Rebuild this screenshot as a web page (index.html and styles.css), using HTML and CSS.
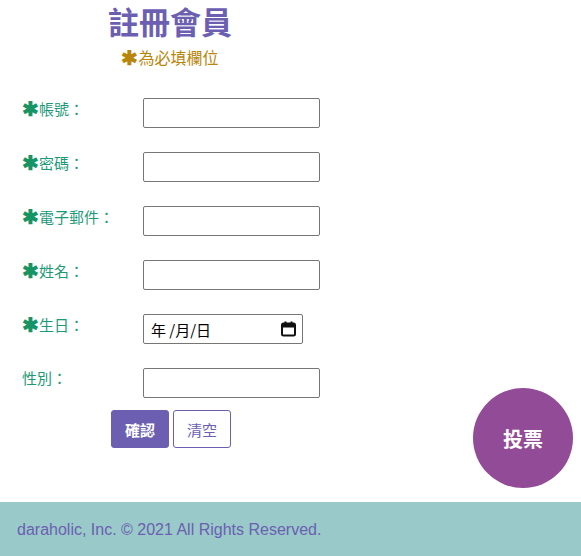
FILE: index.html
```html
<!DOCTYPE html>
<html lang="zh-Hant">
<head>
<meta charset="utf-8">
<title>註冊會員</title>
<link rel="stylesheet" href="styles.css">
</head>
<body>
<main class="page">
  <header class="head">
    <h1 class="title">註冊會員</h1>
    <p class="note"><span class="star">✱</span>為必填欄位</p>
  </header>
  <form class="form">
    <div class="row">
      <label class="label"><span class="req">✱</span>帳號：</label>
      <input class="field" type="text">
    </div>
    <div class="row">
      <label class="label"><span class="req">✱</span>密碼：</label>
      <input class="field" type="password">
    </div>
    <div class="row">
      <label class="label"><span class="req">✱</span>電子郵件：</label>
      <input class="field" type="text">
    </div>
    <div class="row">
      <label class="label"><span class="req">✱</span>姓名：</label>
      <input class="field" type="text">
    </div>
    <div class="row">
      <label class="label"><span class="req">✱</span>生日：</label>
      <div class="field date"><span class="date-text">年 /月/日</span>
        <svg class="cal" width="15" height="16" viewBox="0 0 15 16"><rect x="1" y="2.5" width="13" height="12" rx="1.5" fill="none" stroke="#111" stroke-width="2"/><rect x="1" y="2.5" width="13" height="4" fill="#111"/><rect x="3.5" y="0.5" width="2" height="3" fill="#111"/><rect x="9.5" y="0.5" width="2" height="3" fill="#111"/></svg>
      </div>
    </div>
    <div class="row">
      <label class="label">性別：</label>
      <input class="field" type="text">
    </div>
    <div class="actions">
      <button class="btn btn-primary" type="button">確認</button>
      <button class="btn btn-outline" type="reset">清空</button>
    </div>
  </form>
</main>
<a class="vote" href="#">投票</a>
<footer class="footer">daraholic, Inc. © 2021 All Rights Reserved.</footer>
</body>
</html>
```
FILE: styles.css
```css
html, body {
  margin: 0;
  padding: 0;
  background: #fff;
  font-family: "Noto Sans", "Noto Sans CJK TC", sans-serif;
}
.page {
  height: 502px;
}
.head {
  width: 340px;
  text-align: center;
}
.title {
  margin: 0;
  font-size: 31px;
  line-height: 42px;
  font-weight: 700;
  color: #6c5fb2;
  font-family: "Noto Sans CJK TC", sans-serif;
}
.note {
  margin: 5px 0 0;
  font-size: 16px;
  line-height: 20px;
  color: #b8860b;
  font-family: "Noto Sans CJK TC", sans-serif;
}
.star {
  font-size: 20px;
  font-weight: 700;
  vertical-align: -1px;
}
.form {
  margin-top: 31px;
  padding-left: 22px;
}
.row {
  display: flex;
  align-items: flex-start;
  margin-bottom: 24px;
}
.label {
  width: 121px;
  font-size: 15px;
  line-height: 20px;
  color: #1c9a78;
  font-family: "Noto Sans CJK TC", sans-serif;
}
.req {
  color: #179463;
  font-size: 20px;
  font-weight: 700;
  vertical-align: -1px;
}
.field {
  box-sizing: border-box;
  width: 177px;
  height: 30px;
  margin: 0;
  border: 1px solid #767676;
  border-radius: 2px;
  background: #fff;
  font-size: 15px;
}
.date {
  width: 160px;
  display: flex;
  align-items: center;
  justify-content: space-between;
  padding: 0 6px 0 7px;
}
.date-text {
  font-size: 15px;
  color: #000;
  font-family: "Noto Sans CJK TC", sans-serif;
}
.actions {
  display: flex;
  gap: 4px;
  margin-top: -12px;
  padding-left: 89px;
}
.btn {
  box-sizing: border-box;
  width: 58px;
  height: 38px;
  border-radius: 3px;
  font-size: 15px;
  font-family: "Noto Sans CJK TC", sans-serif;
  padding: 0;
}
.btn-primary {
  background: #6c5fb2;
  border: 1px solid #6c5fb2;
  color: #fff;
  font-weight: 700;
}
.btn-outline {
  background: #fff;
  border: 1px solid #6c5fb2;
  color: #6c5fb2;
}
.vote {
  position: absolute;
  left: 473px;
  top: 388px;
  width: 100px;
  height: 100px;
  border-radius: 50%;
  background: #924b97;
  color: #fff;
  font-size: 20px;
  font-weight: 700;
  font-family: "Noto Sans CJK TC", sans-serif;
  text-decoration: none;
  display: flex;
  align-items: center;
  justify-content: center;
}
.footer {
  box-sizing: border-box;
  height: 54px;
  background: #99c9c8;
  color: #6c5fb2;
  font-size: 16px;
  padding: 18px 17px 0;
  line-height: 20px;
  font-family: "Liberation Sans", Arial, sans-serif;
}
```
